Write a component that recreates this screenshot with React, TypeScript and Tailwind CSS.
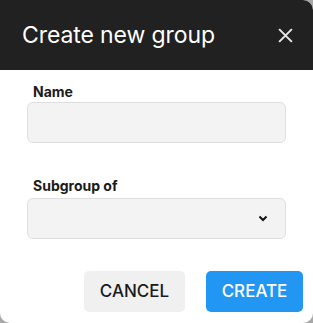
import React from "react";

export default function App() {
  return (
    <div className="w-[313px] h-[323px] bg-[#a8a8a8] overflow-hidden" style={{ fontFamily: "Inter, 'Liberation Sans', sans-serif" }}>
      <div className="w-[313px] h-[323px] bg-white rounded-tr-[10px] rounded-b-[10px] overflow-hidden flex flex-col">
        <div className="h-[70px] bg-[#212121] flex items-center justify-between pl-[22px] pr-[19px]">
          <span className="text-white text-[23px] leading-none tracking-[-0.1px]">Create new group</span>
          <svg width="17" height="17" viewBox="0 0 16 16" className="text-[#e6e6e6]">
            <path d="M2 2 L14 14 M14 2 L2 14" stroke="currentColor" strokeWidth="1.9" strokeLinecap="butt" />
          </svg>
        </div>
        <div className="px-[27px] pt-[12px] flex flex-col">
          <label className="pl-[6px] text-[14px] leading-[20px] font-bold text-[#1a1a1a]">Name</label>
          <div className="mt-[0px] h-[41px] rounded-[6px] bg-[#f3f3f3] border border-[#dedede]" />
          <label className="mt-[33px] pl-[6px] text-[14px] leading-[20px] font-bold text-[#1a1a1a]">Subgroup of</label>
          <div className="mt-[2px] h-[41px] rounded-[6px] bg-[#f3f3f3] border border-[#dedede] flex items-center justify-end pr-[17px]">
            <svg width="10" height="7" viewBox="0 0 10 7">
              <path d="M1.5 1.5 L5 5 L8.5 1.5" stroke="#111" strokeWidth="2" fill="none" />
            </svg>
          </div>
        </div>
        <div className="mt-[32px] flex justify-end gap-[21px] pr-[10px]">
          <button className="w-[101px] h-[41px] rounded-[5px] bg-[#f0f0f0] text-[#1a1a1a] text-[17px] font-medium">CANCEL</button>
          <button className="w-[97px] h-[41px] rounded-[5px] bg-[#2196f3] text-white text-[17px] font-medium">CREATE</button>
        </div>
      </div>
    </div>
  );
}
